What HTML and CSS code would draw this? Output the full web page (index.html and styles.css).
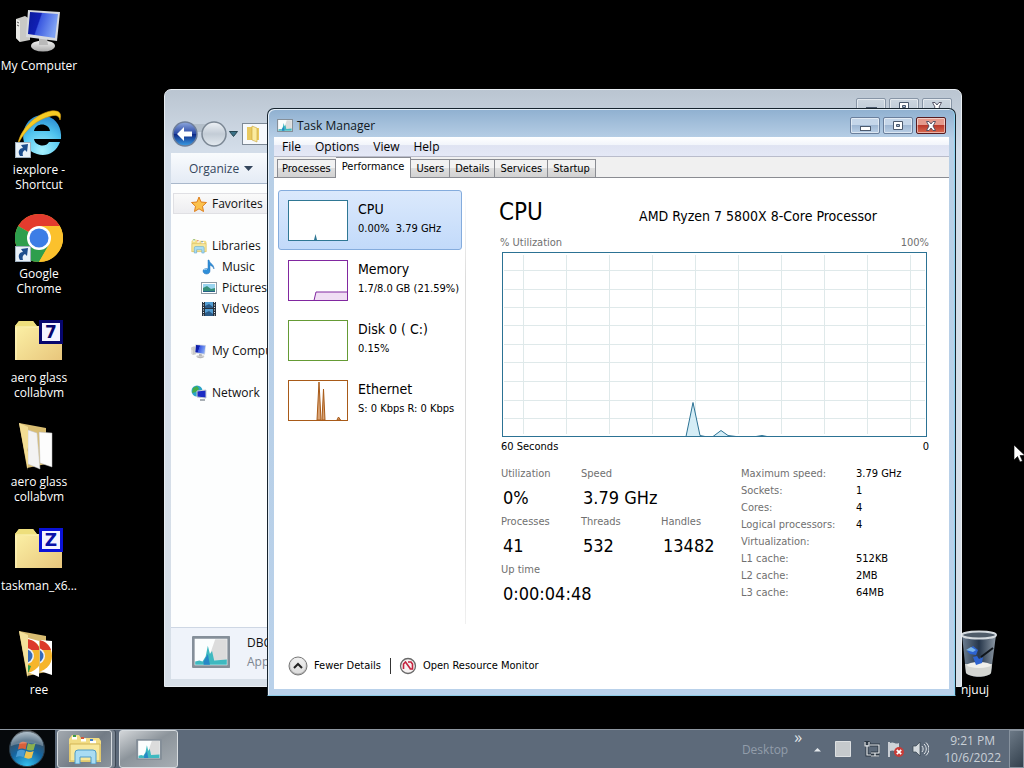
FILE: index.html
```
<!DOCTYPE html>
<html lang="en">
<head>
<meta charset="utf-8">
<title>Desktop</title>
<link rel="stylesheet" href="styles.css">
</head>
<body>
<svg class="defs" aria-hidden="true">
  <defs>
    <linearGradient id="g-screen" x1="0" y1="0" x2="1" y2=".3"><stop offset="0" stop-color="#0a1a9c"/><stop offset=".42" stop-color="#1020b4"/><stop offset=".46" stop-color="#3a58e0"/><stop offset="1" stop-color="#7fa2f4"/></linearGradient>
    <linearGradient id="g-folder" x1="0" y1="0" x2="1" y2="1"><stop offset="0" stop-color="#fdf3a8"/><stop offset="1" stop-color="#e8c67c"/></linearGradient>
    <linearGradient id="g-metal" x1="0" y1="0" x2="0" y2="1"><stop offset="0" stop-color="#f4f4f4"/><stop offset="1" stop-color="#a9a9a9"/></linearGradient>
    <linearGradient id="g-back" x1="0" y1="0" x2="0" y2="1"><stop offset="0" stop-color="#8fa9de"/><stop offset=".48" stop-color="#2b4aa6"/><stop offset=".52" stop-color="#102a86"/><stop offset="1" stop-color="#3aa0e8"/></linearGradient>
    <linearGradient id="g-fwd" x1="0" y1="0" x2="0" y2="1"><stop offset="0" stop-color="#eef2f6"/><stop offset=".5" stop-color="#c3ccd6"/><stop offset="1" stop-color="#e4eaf0"/></linearGradient>
    <radialGradient id="g-ie" cx=".5" cy=".9" r=".9"><stop offset="0" stop-color="#a8f2ff"/><stop offset=".6" stop-color="#4fc3ee"/><stop offset="1" stop-color="#2a8ad2"/></radialGradient>
    <radialGradient id="g-orb" cx=".5" cy="1" r="1"><stop offset="0" stop-color="#35c6f4"/><stop offset=".5" stop-color="#1565a0"/><stop offset=".75" stop-color="#34556f"/><stop offset="1" stop-color="#9db0be"/></radialGradient>
    <linearGradient id="g-bin" x1="0" y1="0" x2="1" y2="0"><stop offset="0" stop-color="#6d7f92"/><stop offset=".5" stop-color="#26364a"/><stop offset="1" stop-color="#8d99a5"/></linearGradient>
    <clipPath id="c-page1"><path d="M13 8l11 3v36l-11-5z"/></clipPath>
    <clipPath id="c-page2"><path d="M25 10l12 1v34l-12-4z"/></clipPath>

    <symbol id="i-shortcut" viewBox="0 0 16 16"><rect x=".5" y=".5" width="15" height="15" fill="#e9f1f8" stroke="#9fb0bf"/><path d="M5 14C2 9 5 6 8 6L6 3l7-1-1 8-2-2C8 9 7 11 8 14z" fill="#1d4d8c"/></symbol>
    <symbol id="i-pc" viewBox="0 0 48 48"><path d="M1 13l9-3 5 3v21L5 36 1 32z" fill="#c9c9c6"/><path d="M1 13l4 2v21l-4-4z" fill="#e9e9e6"/><path d="M2 16l2 1M2 19l2 1" stroke="#555"/><ellipse cx="28" cy="40" rx="12" ry="5.500" fill="url(#g-metal)"/><path d="M24 32h8l1 7h-9z" fill="#b9b9b9"/><path d="M13 4l32 2-3 29-31-4z" fill="#d7dadf"/><path d="M15 6l28 2-3 24-27-4z" fill="url(#g-screen)"/></symbol>
    <symbol id="i-ie" viewBox="0 0 48 48"><path d="M46 29H19c1 7 12 9 15 3h11c-4 11-14 15-23 12C11 41 6 31 9 20 12 9 22 3 32 6c10 3 15 12 14 23zM19 21h16c-1-8-14-9-16 0z" fill="url(#g-ie)"/><path d="M3 34C5 20 20 4 36 1c8-1 11 2 9 9-1-5-5-5-9-4C22 9 10 20 3 34z" fill="#f6cb24" stroke="#d99e10" stroke-width=".6"/></symbol>
    <symbol id="i-chrome" viewBox="0 0 48 48"><circle cx="24" cy="24" r="24" fill="#fbc12d"/><path d="M24 24L3.200 12A24 24 0 0 1 44.800 12z" fill="#e33b2e"/><path d="M3.200 12A24 24 0 0 0 24 48L34.400 30 24 24z" fill="#2e9e4d"/><path d="M24 12h20.800A24 24 0 0 1 24 48l10.400-18z" fill="#fbc12d"/><circle cx="24" cy="24" r="12" fill="#fff"/><circle cx="24" cy="24" r="9.500" fill="#3c7de6"/></symbol>
    <symbol id="i-folder" viewBox="0 0 48 48"><path d="M0 12V8l4-5h14l4 5h25v34H0z" fill="url(#g-folder)"/><path d="M0 10V8l4-5h14l4 6z" fill="#eedf7c"/><path d="M1 42V9h22" fill="none" stroke="#fff6c0"/></symbol>
    <symbol id="i-open" viewBox="0 0 48 48"><path d="M4 1l27 5v36L12 46z" fill="#d9bd72"/><path d="M13 8l9 3 3 36-12-5z" fill="#f3f3f3" stroke="#c4c4c4" stroke-width=".5"/><path d="M24 10l13 1v34l-12-4z" fill="#fdfdfd" stroke="#b7b7b7" stroke-width=".5"/><path d="M4 1l9 4v20l-1 3 1 2v18z" fill="#f2dd94"/></symbol>
    <symbol id="i-ree" viewBox="0 0 48 48"><path d="M4 1l27 5v36L12 46z" fill="#d9bd72"/><g clip-path="url(#c-page1)"><path d="M13 8h12v40H13z" fill="#fff"/><circle cx="10" cy="26" r="17" fill="#f6b52b"/><path d="M10 9c8 0 13 4 15 11H10z" fill="#dc3a2c"/><path d="M10 34l6 2-3 8z" fill="#2e9e4d"/><circle cx="11" cy="26" r="8" fill="#eef2f8"/><circle cx="11" cy="26" r="6.500" fill="#3569b8"/></g><g clip-path="url(#c-page2)"><path d="M25 8h12v40H25z" fill="#fff"/><circle cx="21" cy="26" r="16" fill="#f6b52b"/><path d="M21 10c8 0 13 4 15 10H21z" fill="#dc3a2c"/><circle cx="22" cy="26" r="8" fill="#eef2f8"/><circle cx="22" cy="26" r="6.500" fill="#3569b8"/></g><path d="M4 1l9 4v43z" fill="#f4e19b"/></symbol>
    <symbol id="i-bin" viewBox="0 0 48 48"><path d="M11 5h34l-5 38c-4 5-20 5-25 0z" fill="url(#g-bin)"/><path d="M14 34h27l-1 9c-4 5-20 5-25 0z" fill="#d3d5d1"/><ellipse cx="28" cy="35" rx="12" ry="3" fill="#f0f0ec"/><path d="M16 21l6-5 5 4-2 5-6-1zM22 27l4-1 2 3 4-2-1 6-6 2z" fill="#2d63d0"/><path d="M15 20l5-3 5 3-3 2z" fill="#7db7e8"/><path d="M30 27l12-9" stroke="#10161c" stroke-width="2"/><ellipse cx="28" cy="5" rx="17" ry="3.500" fill="#4f5c69" stroke="#d4dade" stroke-width="2"/></symbol>
    <symbol id="i-monitor" viewBox="0 0 36 30"><rect x="1" y="1" width="34" height="28" rx="1" fill="#fbfdfd" stroke="#858f99" stroke-width="3"/><path d="M22 3h11v20H15z" fill="#dcdcdc"/><path d="M3 24l4-1 3 1 3-5 2-10 2 8 2-3 2 9 12-1v5H3z" fill="#3fb9c0"/><path d="M11 24l4-7 2 10h-6z" fill="#2787c6"/></symbol>
    <symbol id="i-lib" viewBox="0 0 34 30"><path d="M1 5l3-4h7l2 3h18l2 3v21H1z" fill="#f1dc84"/><path d="M4 4h5M13 6h5M22 8h6" stroke="#fff" stroke-width="3"/><path d="M5 2h3" stroke="#3c9a48" stroke-width="2"/><path d="M13 4h3" stroke="#d5573b" stroke-width="2"/><path d="M22 6h3" stroke="#4380ca" stroke-width="2"/><path d="M2 10h30v17H2z" fill="#f8e89c" stroke="#d2b557"/><path d="M7 30V19q0-3 3-3h15q3 0 3 3v11h-5v-7H12v7z" fill="#a9dcf3" stroke="#4e9bc7"/></symbol>
    <symbol id="i-star" viewBox="0 0 16 16"><path d="M8 1l2 5 5.500.5-4 3.800 1 5.200L8 12.800 3.500 15.500l1-5.200-4-3.800L6 6z" fill="#fbc14c" stroke="#de7f1d"/></symbol>
    <symbol id="i-music" viewBox="0 0 16 16"><path d="M8 1c1 4 5 4 5 9-1-3-3-3-4-4v6c0 4-7 4-7 0 0-2 3-3 5-2V1z" fill="#2f8fd8" stroke="#2470b8" stroke-width=".5"/><path d="M3 11c1-1 2-1 3-.5" stroke="#b3e0ff" fill="none"/></symbol>
    <symbol id="i-pic" viewBox="0 0 16 16"><rect x=".5" y="2.500" width="15" height="11" fill="#fff" stroke="#8f9ba5"/><path d="M2 4h12v8H2z" fill="#9ad5f0"/><path d="M2 8l4-2 4 3 4-1v4H2z" fill="#37907a"/><path d="M2 11h12v1H2z" fill="#255f86"/></symbol>
    <symbol id="i-vid" viewBox="0 0 16 16"><path d="M1 1h14v14H1z" fill="#27323e"/><path d="M4 1h8v6H4zM4 8h8v7H4z" fill="#549fd4"/><path d="M4 5l4-2 4 3v1H4zM4 12l4-2 4 3v2H4z" fill="#2b5a86"/><path d="M2.500 1v14M13.500 1v14" stroke="#e4e8ec" stroke-dasharray="1 1.500"/></symbol>
    <symbol id="i-net" viewBox="0 0 16 16"><circle cx="6" cy="6" r="5.500" fill="#2ba4c8"/><path d="M2 3l4-2 2 3-3 3-4 1zM5 8l3 1-1 2z" fill="#45ad49"/><path d="M6 6l9-1v8l-9-1z" fill="#1c2bc4" stroke="#c3cad2"/><path d="M9 15h5" stroke="#8d949c" stroke-width="1.500"/></symbol>
    <symbol id="i-min" viewBox="0 0 14 12"><rect x="2.500" y="6.500" width="10" height="4" fill="#fff" stroke="#4c5a6e"/></symbol>
    <symbol id="i-max" viewBox="0 0 14 12"><path d="M2.500 1.500h9v8h-9z" fill="#fff" stroke="#4c5a6e"/><path d="M5.500 4.500h3v2h-3z" fill="#a9bbd3" stroke="#4c5a6e"/></symbol>
    <symbol id="i-close" viewBox="0 0 14 12"><path d="M2.500 1.500h2.500L7 4l2-2.500h2.500L9 6l2.500 4.500H9L7 8l-2 2.500H2.500L5 6z" fill="#fff" stroke="#4a4a5c" stroke-width=".9"/></symbol>
  </defs>
</svg>

<main class="desktop">
  <nav class="shortcuts" aria-label="Desktop icons">
    <a class="shortcut" href="#"><span class="pic"><svg class="art"><use href="#i-pc"/></svg></span><span>My Computer</span></a>
    <a class="shortcut" href="#"><span class="pic"><svg class="art"><use href="#i-ie"/></svg><svg class="arrow"><use href="#i-shortcut"/></svg></span><span>iexplore -<br>Shortcut</span></a>
    <a class="shortcut" href="#"><span class="pic"><svg class="art"><use href="#i-chrome"/></svg><svg class="arrow"><use href="#i-shortcut"/></svg></span><span>Google<br>Chrome</span></a>
    <a class="shortcut" href="#"><span class="pic"><svg class="art"><use href="#i-folder"/></svg><b class="badge navy">7</b></span><span>aero glass<br>collabvm</span></a>
    <a class="shortcut" href="#"><span class="pic"><svg class="art"><use href="#i-open"/></svg></span><span>aero glass<br>collabvm</span></a>
    <a class="shortcut" href="#"><span class="pic"><svg class="art"><use href="#i-folder"/></svg><b class="badge">Z</b></span><span>taskman_x6...</span></a>
    <a class="shortcut" href="#"><span class="pic"><svg class="art"><use href="#i-ree"/></svg></span><span>ree</span></a>
  </nav>
  <a class="shortcut bin" href="#"><span class="pic"><svg class="art"><use href="#i-bin"/></svg></span><span>njuuj</span></a>

  <section class="window explorer" aria-label="Explorer">
    <header class="explorer-top">
      <div class="nav">
        <button class="round" aria-label="Back"><svg width="58" height="28" viewBox="0 0 58 28"><path d="M14 4h28v8H14z" fill="#b4bfca"/><circle cx="14" cy="14" r="12" fill="url(#g-back)" stroke="#6f7f99" stroke-width="1.500"/><path d="M6 14l7-7v4.500h8v5h-8V21z" fill="#fff"/><circle cx="43" cy="14" r="12" fill="url(#g-fwd)" stroke="#7b8794" stroke-width="1.500"/></svg></button>
        <button class="round" aria-label="Recent pages"><svg width="9" height="6" viewBox="0 0 9 6"><path d="M.5.5h8l-4 5z" fill="#3b7187" stroke="#244450"/></svg></button>
        <div class="address"><svg width="16" height="18" viewBox="0 0 16 18"><path d="M2 2h5l1 1h6v12H2z" fill="#e9c95f"/><path d="M7 1l5 2v14l-5-2z" fill="#fbeb9f" stroke="#c9a43e" stroke-width=".6"/></svg></div>
      </div>
      <div class="controls">
        <button aria-label="Minimize"><svg><use href="#i-min"/></svg></button>
        <button aria-label="Maximize"><svg><use href="#i-max"/></svg></button>
        <button aria-label="Close"><svg><use href="#i-close"/></svg></button>
      </div>
    </header>
    <div class="explorer-body">
      <div class="toolbar"><button class="plain">Organize <svg width="9" height="5" viewBox="0 0 9 5"><path d="M0 0h9L4.500 5z" fill="#34465c"/></svg></button></div>
      <nav class="tree" aria-label="Folders">
        <a class="lit" href="#"><svg><use href="#i-star"/></svg>Favorites</a>
        <a class="spaced" href="#"><svg><use href="#i-lib"/></svg>Libraries</a>
        <a class="sub" href="#"><svg><use href="#i-music"/></svg>Music</a>
        <a class="sub" href="#"><svg><use href="#i-pic"/></svg>Pictures</a>
        <a class="sub" href="#"><svg><use href="#i-vid"/></svg>Videos</a>
        <a class="spaced" href="#"><svg><use href="#i-pc"/></svg>My Computer</a>
        <a class="spaced" href="#"><svg><use href="#i-net"/></svg>Network</a>
      </nav>
      <footer class="details">
        <svg width="38" height="32"><use href="#i-monitor"/></svg>
        <div><p>DBC Task Manager</p><p class="muted">Application</p></div>
      </footer>
    </div>
  </section>

  <section class="window taskman" aria-label="Task Manager">
    <header class="titlebar">
      <svg width="16" height="13" viewBox="0 0 36 30" preserveAspectRatio="none"><use href="#i-monitor"/></svg>
      <h1>Task Manager</h1>
      <div class="controls">
        <button aria-label="Minimize"><svg><use href="#i-min"/></svg></button>
        <button aria-label="Maximize"><svg><use href="#i-max"/></svg></button>
        <button class="close" aria-label="Close"><svg><use href="#i-close"/></svg></button>
      </div>
    </header>
    <div class="client">
      <nav class="menubar" aria-label="Menu"><button>File</button><button>Options</button><button>View</button><button>Help</button></nav>
      <div class="tabs" role="tablist">
        <button role="tab">Processes</button><button role="tab" class="active" aria-selected="true">Performance</button><button role="tab">Users</button><button role="tab">Details</button><button role="tab">Services</button><button role="tab">Startup</button>
      </div>
      <div class="panel">
        <div class="resources">
          <button class="resource selected"><svg class="mini cpu" viewBox="0 0 60 41"><rect x=".5" y=".5" width="59" height="40"/><path d="M26 40l1.500-6 1.500 6z"/></svg><span class="name">CPU</span><span class="info">0.00%&nbsp; 3.79 GHz</span></button>
          <button class="resource"><svg class="mini mem" viewBox="0 0 60 41"><rect x=".5" y=".5" width="59" height="40"/><path d="M26 40.500l2-8.500h31.500v8.500z" fill="#f0def4"/></svg><span class="name">Memory</span><span class="info">1.7/8.0 GB (21.59%)</span></button>
          <button class="resource"><svg class="mini disk" viewBox="0 0 60 41"><rect x=".5" y=".5" width="59" height="40"/></svg><span class="name">Disk 0 ( C:)</span><span class="info">0.15%</span></button>
          <button class="resource"><svg class="mini eth" viewBox="0 0 60 41"><rect x=".5" y=".5" width="59" height="40"/><path d="M29 40l2-38 2 38zM34 40l1.500-31L37 40zM49 40l1.500-3 2 3z" fill="#d8a273"/></svg><span class="name">Ethernet</span><span class="info">S: 0 Kbps R: 0 Kbps</span></button>
        </div>
        <div class="detail">
          <div class="heading"><h2>CPU</h2><span>AMD Ryzen 7 5800X 8-Core Processor</span></div>
          <div class="axis muted"><span>% Utilization</span><span>100%</span></div>
          <svg class="chart" viewBox="0 0 425 185" preserveAspectRatio="none" role="img" aria-label="CPU utilization">
            <path class="grid" d="M21.500 3v179M64.500 3v179M107.500 3v179M150.500 3v179M193.500 3v179M236.500 3v179M279.500 3v179M322.500 3v179M365.500 3v179M408.500 3v179M2 18.500h421M2 37.500h421M2 55.500h421M2 73.500h421M2 92.500h421M2 110.500h421M2 129.500h421M2 148.500h421M2 166.500h421"/>
            <path class="plot" d="M184 184.500l7-34 7 33 5 1h8l8-6 7 5 8 1h20l6-1 5 1z"/>
            <rect x=".5" y=".5" width="424" height="184"/>
          </svg>
          <div class="axis low"><span>60 Seconds</span><span>0</span></div>
          <div class="stats">
            <dl class="counters">
              <div><dt>Utilization</dt><dd>0%</dd></div>
              <div class="wide"><dt>Speed</dt><dd>3.79 GHz</dd></div>
              <div><dt>Processes</dt><dd>41</dd></div>
              <div><dt>Threads</dt><dd>532</dd></div>
              <div><dt>Handles</dt><dd>13482</dd></div>
              <div class="wide"><dt>Up time</dt><dd>0:00:04:48</dd></div>
            </dl>
            <table class="specs">
              <tr><th scope="row">Maximum speed:</th><td>3.79 GHz</td></tr>
              <tr><th scope="row">Sockets:</th><td>1</td></tr>
              <tr><th scope="row">Cores:</th><td>4</td></tr>
              <tr><th scope="row">Logical processors:</th><td>4</td></tr>
              <tr><th scope="row">Virtualization:</th><td></td></tr>
              <tr><th scope="row">L1 cache:</th><td>512KB</td></tr>
              <tr><th scope="row">L2 cache:</th><td>2MB</td></tr>
              <tr><th scope="row">L3 cache:</th><td>64MB</td></tr>
            </table>
          </div>
        </div>
      </div>
      <footer class="actions">
        <button><svg width="20" height="20" viewBox="0 0 20 20"><circle cx="10" cy="10" r="9" fill="url(#g-metal)" stroke="#777"/><circle cx="10" cy="10" r="7.500" fill="#efefef" opacity=".7"/><path d="M6 12l4-4 4 4" fill="none" stroke="#222" stroke-width="2"/></svg>Fewer Details</button>
        <a href="#"><svg width="18" height="18" viewBox="0 0 18 18"><circle cx="9" cy="9" r="7.500" fill="#f6f2f2" stroke="#696969" stroke-width="1.300"/><path d="M4.500 12V7l2-2 5 7M9 5h3l1.500 2v5h-3" fill="none" stroke="#c4233e" stroke-width="1.600"/></svg>Open Resource Monitor</a>
      </footer>
    </div>
  </section>

  <svg class="pointer" width="13" height="20" viewBox="0 0 13 20"><path d="M1 1v15l3.500-3.500L7 18l2.500-1-2.500-5.500h5z" fill="#fff" stroke="#000" stroke-width=".6"/></svg>
</main>

<footer class="taskbar">
  <button class="start" aria-label="Start"><svg width="40" height="40" viewBox="0 0 40 40"><circle cx="20" cy="20" r="18.500" fill="url(#g-orb)" stroke="#2d3c48"/><path d="M12 14c3-2 5-2 8-.5l-1.500 7c-3-1.500-5-1-8 0z" fill="#d8603a"/><path d="M21 14c3 1.500 5 1.500 8 0l-2 7c-3 1-5 1-7.500-.5z" fill="#8bb050"/><path d="M10 22c3-1.500 5-1.500 8-.2l-1.700 7c-3-1.500-5-1.500-8 0z" fill="#4a9cd4"/><path d="M19 22c3 1.500 5 1.500 8 .2l-2 7c-3 1.500-5 1.200-8-.2z" fill="#ecc350"/><path d="M3 17a17 17 0 0 1 34 0c-10-4-24-4-34 0z" fill="#fff" opacity=".25"/></svg></button>
  <button class="app stacked" aria-label="Explorer"><svg width="34" height="30"><use href="#i-lib"/></svg></button>
  <button class="app running" aria-label="Task Manager"><svg width="26" height="21"><use href="#i-monitor"/></svg></button>
  <div class="tray">
    <span class="toolband">Desktop</span><button class="chev" aria-label="More">»</button>
    <button aria-label="Show hidden icons"><svg width="9" height="6" viewBox="0 0 9 6"><path d="M1 5.500h7L4.500 2z" fill="#e3e7eb"/></svg></button>
    <button aria-label="Task Manager activity"><svg width="16" height="16" viewBox="0 0 16 16"><path d="M.5.5h15v15H.5z" fill="#c5c9cc" stroke="#dde0e2"/></svg></button>
    <button aria-label="Network status"><svg width="16" height="16" viewBox="0 0 16 16"><path d="M5 4h10v8H7M11 12v3M7 15h8M1 1v3h4V1M3 4v10h4M2 0v2M4 0v2" fill="none" stroke="#2c3743" stroke-width="3"/><path d="M6 4h9v8H7M11 12v3M7 15h8M1 1v4h4V1M3 4v10h4" fill="none" stroke="#e8ecef" stroke-width="1.200"/></svg></button>
    <button aria-label="Action center"><svg width="16" height="16" viewBox="0 0 16 16"><path d="M1 1v15" stroke="#f0f2f4" stroke-width="1.500"/><path d="M2 2c4-2 5 2 9 0v8c-4 2-5-2-9 0z" fill="#cfd4d8"/><circle cx="11" cy="11" r="5" fill="#c83c38"/><path d="M8.800 8.800l4.400 4.400M13.200 8.800l-4.400 4.400" stroke="#fff" stroke-width="1.700"/></svg></button>
    <button aria-label="Volume"><svg width="17" height="16" viewBox="0 0 17 16"><path d="M1 5h3l4-4v14l-4-4H1z" fill="#d5dade" stroke="#37424e" stroke-width=".7"/><path d="M10 5c1.500 2 1.500 4 0 6M12 3c3 3 3 7 0 10M14 1.500c4 4 4 9 0 13" fill="none" stroke="#e4e8eb"/></svg></button>
    <button class="clock"><span>9:21 PM</span><span>10/6/2022</span></button>
  </div>
  <button class="peek" aria-label="Show desktop"></button>
</footer>
</body>
</html>
```
FILE: styles.css
```
* { box-sizing: border-box; }
html, body { height: 100%; }
body {
  margin: 0;
  display: flex;
  flex-direction: column;
  overflow: hidden;
  background: #000;
  font: 12px/15px "Open Sans", "Noto Sans", sans-serif;
}
h1, h2, p, dl, dd { margin: 0; font-weight: normal; }
button { margin: 0; padding: 0; border: 0; background: none; font: inherit; color: inherit; text-align: left; }
a { color: inherit; text-decoration: none; }
svg { display: block; flex: none; }
.defs { position: absolute; width: 0; height: 0; }

/* Desktop */
.desktop { position: relative; flex: 1; min-height: 0; overflow: hidden; }
.shortcuts { display: grid; grid-auto-rows: 104px; width: 78px; padding-top: 6px; }
.shortcut { display: flex; flex-direction: column; align-items: center; gap: 4px; width: 78px; color: #fff; text-align: center; white-space: nowrap; }
.shortcut .pic { position: relative; width: 48px; height: 48px; }
.art { width: 48px; height: 48px; }
.arrow { position: absolute; left: 0; bottom: 0; width: 16px; height: 16px; }
.badge {
  position: absolute; right: 0; top: 2px; width: 24px; height: 24px;
  border: 3px solid #0a12d8; background: #f4f4ff; color: #0a12a8;
  font: bold 17px/18px "DejaVu Sans", sans-serif; text-align: center;
}
.badge.navy { border-color: #06066e; color: #06066e; }
.bin { position: absolute; right: 10px; top: 630px; }
.pointer { position: absolute; left: 1013px; top: 444px; }

/* Windows */
.window { position: absolute; display: flex; flex-direction: column; border-radius: 7px 7px 0 0; }
.controls { display: flex; gap: 3px; align-self: flex-start; margin-left: auto; }
.controls button {
  display: flex; align-items: center; justify-content: center; width: 30px; height: 17px;
  border: 1px solid #6a7f9c; border-radius: 2px; box-shadow: inset 0 0 0 1px #ffffff80;
  background: linear-gradient(#c5d6e9 45%, #9fb7d3 50%, #b9cfe6);
}
.controls svg { width: 14px; height: 12px; }
.controls .close { border-color: #561c20; background: linear-gradient(#e59a8c 45%, #bb3a2c 50%, #d96a50); }

.explorer {
  left: 164px; top: 89px; right: 62px; bottom: 42px; padding: 0 6px 7px;
  border: 1px solid #e8edf2; background: linear-gradient(#bac5d1, #d3dde9 60px, #d7dfe8);
  color: #1c2636;
}
.explorer-top { display: flex; height: 63px; padding-top: 8px; }
.explorer .controls button { border-color: #8795a6; background: linear-gradient(#ccd6e0, #bcc8d5); }
.explorer .controls { padding-right: 3px; }
.nav { display: flex; align-items: center; height: 28px; margin-top: 22px; flex: 1; min-width: 0; }
.address { display: flex; align-items: center; flex: 1; height: 22px; margin-left: 4px; padding-left: 2px; border: 1px solid #7d8995; background: #f6f9fc; }
.explorer-body { flex: 1; min-height: 0; display: flex; flex-direction: column; background: #fdfefe; }
.toolbar { display: flex; align-items: center; height: 31px; padding-left: 18px; background: linear-gradient(#f9fbfd, #e4ebf5); border-bottom: 1px solid #a9b8cb; color: #34465c; }
.plain { display: flex; align-items: center; gap: 5px; }
.tree { flex: 1; min-height: 0; padding: 9px 0 0 2px; }
.tree a { display: flex; align-items: center; gap: 5px; height: 21px; padding-left: 18px; color: #111; }
.tree svg { width: 16px; height: 16px; }
.tree .lit { padding-left: 17px; background: linear-gradient(#fafafa, #ededf0); border: 1px solid #e0e0e4; }
.tree .sub { padding-left: 28px; }
.tree .spaced { margin-top: 21px; }
.details { display: flex; gap: 17px; height: 52px; padding: 8px 21px; background: #eff3fa; border-top: 1px solid #ced7e4; line-height: 18px; color: #111; }
.details p { margin-top: -2px; }
.details .muted { color: #7c8590; margin-top: 1px; }

.taskman {
  left: 267px; top: 108px; right: 68px; bottom: 33px; padding: 0 6px 6px;
  border: 1px solid #17242e; border-bottom-color: #8ccbe6;
  background: linear-gradient(#8fb0d0, #b8cfe6 30px, #b9d1ea);
  box-shadow: inset 1px 1px 0 #e4eef8, inset -1px 0 0 #8fd5f2;
}
.titlebar { display: flex; align-items: center; gap: 4px; height: 28px; padding: 5px 3px 0; color: #101822; }
.titlebar h1 { font-size: 12px; line-height: 15px; }
.client {
  flex: 1; min-height: 0; display: flex; flex-direction: column; background: #fff;
  font: 11px/14px "DejaVu Sans Condensed", "Noto Sans", sans-serif; color: #000;
}
.titlebar .controls { align-self: center; }
.menubar { display: flex; gap: 14px; height: 19px; padding-left: 8px; background: linear-gradient(#fff, #f2f5fb 40%, #dfe3f2 45%, #e4e8f6); font: 12px/19px "Open Sans", "Noto Sans", sans-serif; }
.tabs { display: flex; align-items: flex-end; height: 22px; padding-left: 3px; background: #f0f0f0; border-top: 1px solid #b9bccb; border-bottom: 1px solid #8a8c92; }
.tabs button { height: 18px; padding: 0 5px; border: 1px solid #8a8c92; border-bottom: 0; background: linear-gradient(#f2f2f2 45%, #dedede 50%, #d2d2d2); border-left-width: 0; }
.tabs button:first-child { padding: 0 4px; border-left-width: 1px; }
.tabs .active { position: relative; height: 21px; margin-bottom: -1px; padding: 0 6px 3px; background: #fff; }

.panel { flex: 1; min-height: 0; display: flex; padding: 12px 20px 0 4px; }
.resources { position: relative; display: flex; flex-direction: column; flex: none; width: 188px; height: 434px; padding-right: 4px; }
.resources::after { content: ""; position: absolute; right: 0; top: 0; bottom: 0; width: 1px; background: linear-gradient(#fff, #dcdcdc 20%, #dcdcdc 80%, #f0f0f0); }
.resource { display: grid; grid-template-columns: 60px 1fr; grid-template-rows: 18px 18px; column-gap: 10px; row-gap: 2px; align-content: start; height: 60px; padding: 9px 0 0 9px; border: 1px solid transparent; border-radius: 3px; }
.resource.selected { border-color: #84acdd; background: linear-gradient(#dbe9fc, #c2dafa); }
.name { font-size: 14px; line-height: 18px; }
.info { line-height: 18px; white-space: nowrap; }
.mini { grid-row: 1 / 3; width: 60px; height: 41px; }
.mini rect { fill: #fff; }
.cpu { stroke: #2f7794; } .cpu path { fill: #2f7794; stroke: none; }
.mem { stroke: #8128a0; } .disk { stroke: #659b35; } .eth { stroke: #a85a18; }

.detail { flex: 1; min-width: 0; padding-left: 33px; }
.heading { display: flex; align-items: center; justify-content: space-between; height: 44px; padding-right: 52px; font-size: 14px; }
.heading h2 { font-size: 24px; line-height: 30px; }
.heading span { padding-top: 8px; }
.axis { display: flex; justify-content: space-between; padding: 2px 0 2px 1px; }
.axis.low { padding: 3px 0 0 2px; }
.muted { color: #707070; }
.chart { width: calc(100% - 5px); height: 185px; margin-left: 3px; }
.chart rect { fill: none; stroke: #2c7294; }
.grid { fill: none; stroke: #dfe9ea; }
.plot { fill: #d5edf6; stroke: #2c7294; }
.stats { display: flex; justify-content: space-between; gap: 20px; margin-top: 13px; padding-left: 2px; }
.counters { display: grid; grid-template-columns: 80px 80px 60px; grid-auto-rows: 48px; align-content: start; }
.counters .wide { grid-column-end: span 2; }
.counters dt { color: #707070; }
.counters dd { padding: 7px 0 0 2px; font-size: 18px; line-height: 20px; }
.specs { border-collapse: collapse; flex: none; width: 191px; margin-right: 5px; align-self: flex-start; }
.specs th { width: 115px; padding: 0 0 3px; color: #707070; font-weight: normal; text-align: left; white-space: nowrap; }
.specs td { padding: 0 0 3px; }
.actions { display: flex; height: 46px; padding: 12px 14px; }
.actions button, .actions a { display: flex; align-items: center; gap: 6px; height: 22px; }
.actions a { margin-left: 8px; }
.actions button::after { content: ""; height: 16px; margin-left: 3px; border-left: 1px solid #333; }

/* Taskbar */
.taskbar { display: flex; height: 39px; flex: none; background: #5d6a7a; border-top: 1px solid #8d96a0; color: #c9d0d7; }
.start { width: 55px; padding-left: 7px; background: #06090c; }
.start svg { height: 38px; }
.app { display: flex; align-items: center; justify-content: center; width: 55px; height: 38px; margin-left: 2px; border: 1px solid #d7dce0; border-radius: 3px; background: linear-gradient(135deg, #a3a9af, #727b85 55%, #8b949c); }
.stacked { box-shadow: 3px 0 0 #77828e, 4px 0 0 #3c4754; }
.running { width: 59px; margin-left: 7px; background: linear-gradient(150deg, #d3d6d9, #8c949b 45%, #a6adb3); }
.tray { display: flex; align-items: center; margin-left: auto; }
.tray > * { margin-right: 13px; }
.tray .toolband { margin-right: 6px; color: #929daa; }
.tray .chev { align-self: flex-start; margin-right: 11px; font-size: 16px; line-height: 14px; color: #e1e5e9; }
.tray button:nth-of-type(4), .tray button:nth-of-type(5) { margin-right: 8px; }
.tray .clock { display: flex; flex-direction: column; align-items: center; margin: 0 8px 0 2px; line-height: 17px; }
.peek { width: 15px; border: 1px solid #87929e; background: linear-gradient(135deg, #6c7986, #33404d); }
```
